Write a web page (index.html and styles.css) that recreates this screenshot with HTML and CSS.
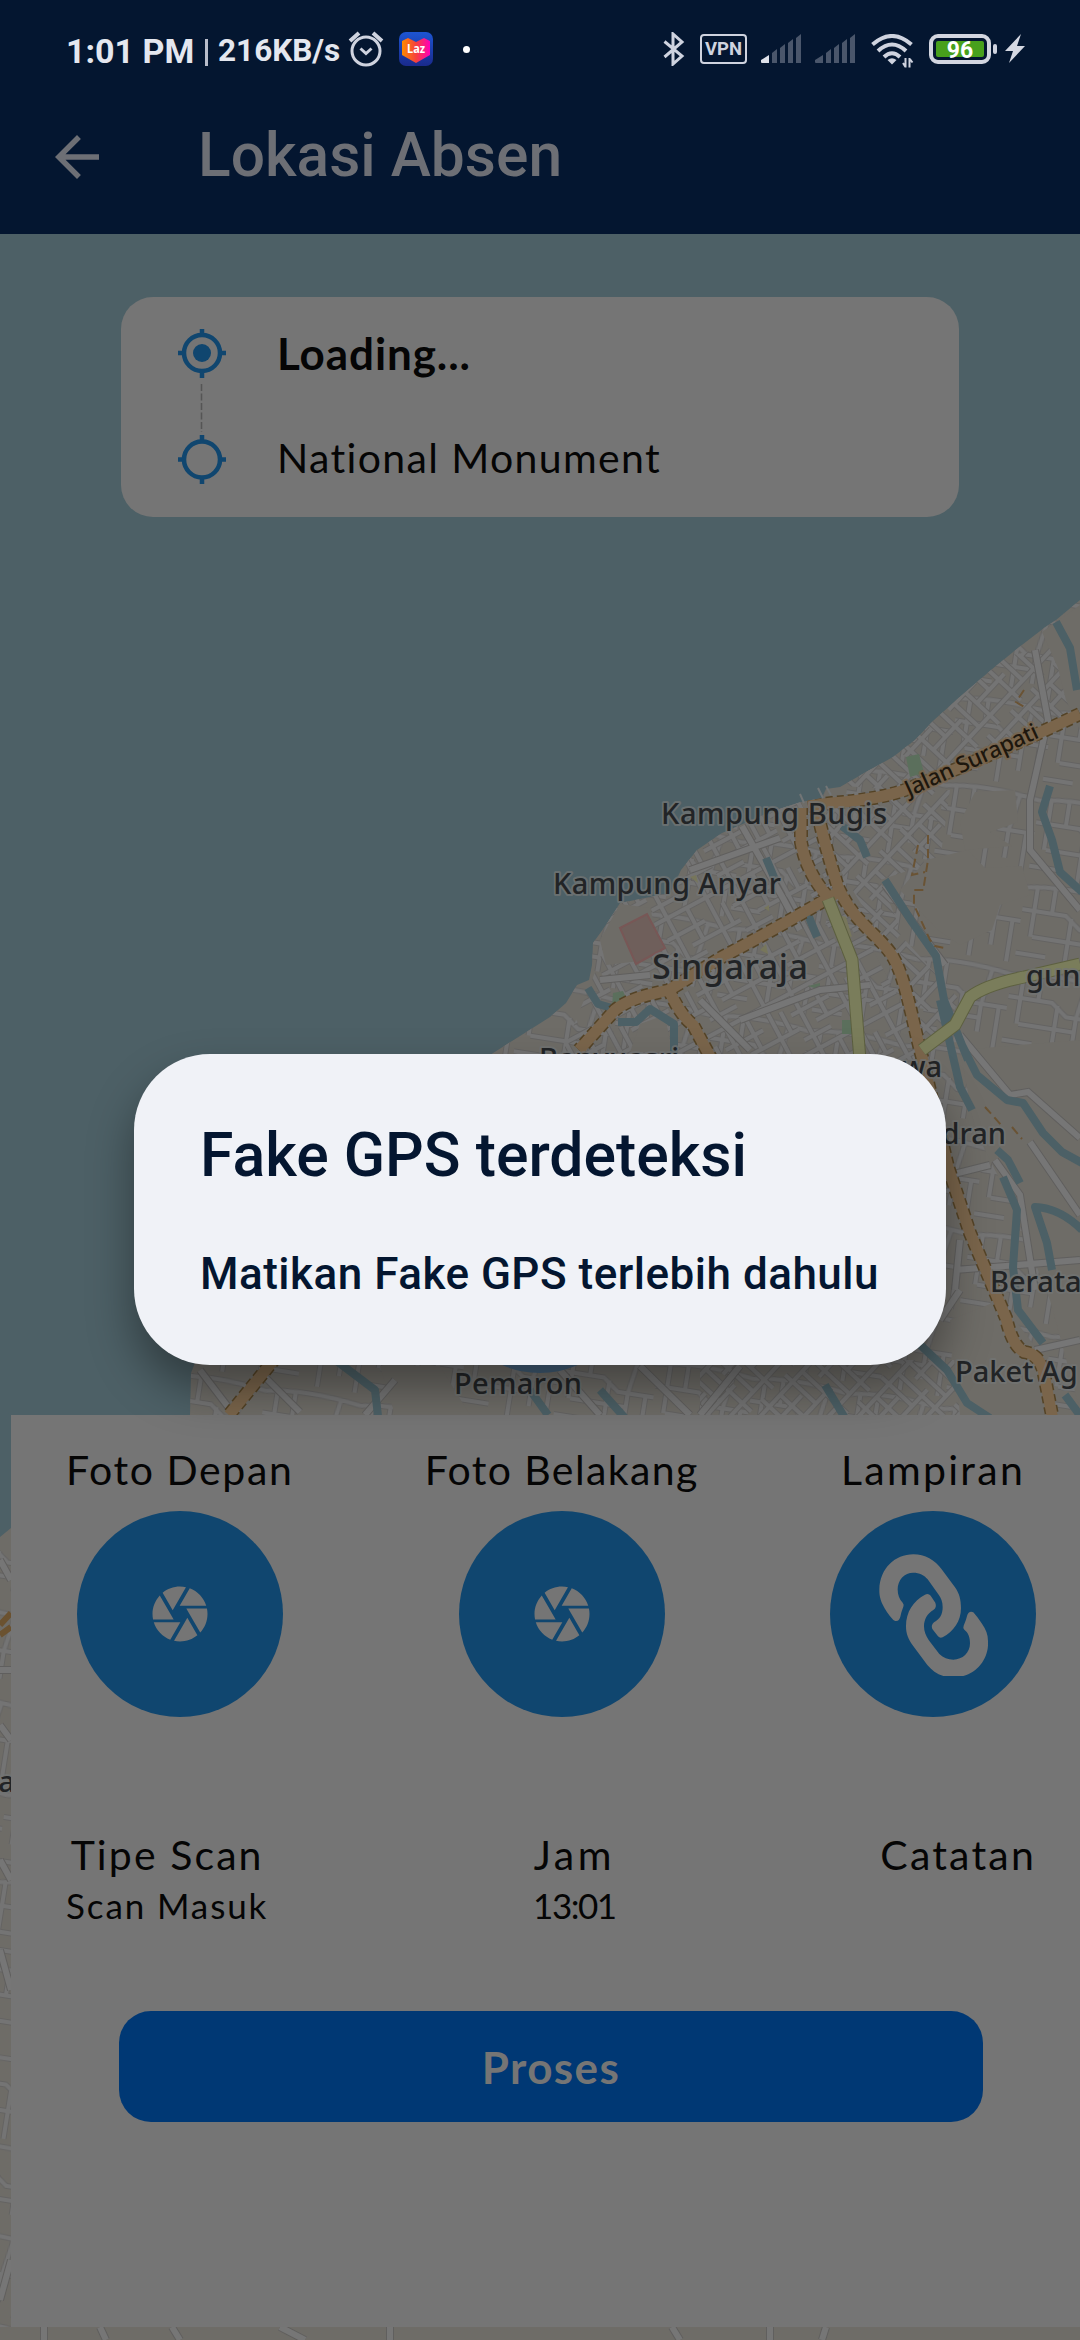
FILE: index.html
```html
<!DOCTYPE html>
<html lang="id">
<head>
<meta charset="utf-8">
<title>Lokasi Absen</title>
<link rel="stylesheet" href="styles.css">
</head>
<body>
<div class="screen">
  <header class="header">
    <div class="status">
      <span class="clock">1:01 PM</span><span class="bar"></span><span class="speed">216KB/s</span>
      <svg class="alarm" width="36" height="38" viewBox="0 0 36 38" fill="none" stroke="#cfd3df" stroke-width="3"><circle cx="18" cy="21" r="14"/><path d="M2 11L11 3M34 11L25 3" stroke-width="4"/><path d="M12.500 18.500l5.500 5 5.500-5" stroke-width="3"/></svg>
      <svg class="laz" width="34" height="34" viewBox="0 0 34 34"><defs><linearGradient id="lg" x1="0" x2="1"><stop offset="0" stop-color="#ff8a00"/><stop offset=".5" stop-color="#f6413c"/><stop offset="1" stop-color="#ff00b8"/></linearGradient><linearGradient id="lb" x2="0" y2="1"><stop stop-color="#1d55d2"/><stop offset="1" stop-color="#1a2a8c"/></linearGradient></defs><rect width="34" height="34" rx="7" fill="url(#lb)"/><path d="M3 9l6-3 8 4 8-4 6 3v14l-14 8-14-8z" fill="url(#lg)"/><text x="8" y="21" class="laz-text" textLength="18" lengthAdjust="spacingAndGlyphs">Laz</text></svg>
      <span class="dot"></span>
      <span class="grow"></span>
      <svg class="bt" width="22" height="34" viewBox="0 0 22 34" fill="none" stroke="#cfd3df" stroke-width="3"><path d="M1.500 9.500L19 24l-9 8V2l9 8L1.500 25"/></svg>
      <span class="vpn">VPN</span>
      <svg class="sig" width="40" height="30" viewBox="0 0 40 30" fill="#4a566b"><path fill="#dfe2ea" d="M0 26l8-5v8H1a1 1 0 0 1-1-1z"/><path d="M11 19l5-4v14h-5zM19 14l5-4v19h-5zM27 9l5-4v24h-5zM35 4l5-4v29h-5z"/></svg>
      <svg class="sig" width="40" height="30" viewBox="0 0 40 30" fill="#4a566b"><path d="M0 26l8-5v8H1a1 1 0 0 1-1-1zM11 19l5-4v14h-5zM19 14l5-4v19h-5zM27 9l5-4v24h-5zM35 4l5-4v29h-5z"/></svg>
      <svg class="wifi" width="44" height="34" viewBox="0 0 44 34" fill="none" stroke="#cfd3df" stroke-width="4"><path d="M1.500 10.500Q21 -6.500 40.500 10.500M7 17Q21 4 35 17M13 23Q21 15.500 29 23"/><path d="M21 30.500l-4.500-4.500q4.500-3.500 9 0z" fill="#cfd3df" stroke="none"/><path d="M34.500 24v9.500M32 29l2.500 4M38.500 33.500V24M38.500 24.500l3 4" stroke-width="2"/></svg>
      <span class="battery"><span class="level">96</span></span><span class="nub"></span>
      <svg class="bolt" width="20" height="30" viewBox="0 0 20 30"><path d="M16 0L0 17h8L4 29 20 12h-8z" fill="#d5d8e2"/></svg>
    </div>
    <div class="titlebar">
      <svg width="66" height="66" viewBox="0 0 24 24" fill="#6d6f75"><path d="M20 11H7.830l5.590-5.590L12 4l-8 8 8 8 1.410-1.410L7.830 13H20z"/></svg>
      <h1>Lokasi Absen</h1>
    </div>
  </header>

  <main class="stage">
    <svg class="map" width="1080" height="2106" viewBox="0 234 1080 2106">
      <defs>
        <pattern id="sa" width="74" height="62" patternUnits="userSpaceOnUse" patternTransform="rotate(-28)">
          <path class="casing" d="M0 8H74M0 28H42M20 44H74M0 56H30M10 0V62M32 8V44M54 0V62M66 20V44"/>
          <path class="street" d="M0 8H74M0 28H42M20 44H74M0 56H30M10 0V62M32 8V44M54 0V62M66 20V44"/>
        </pattern>
        <pattern id="sb" width="64" height="72" patternUnits="userSpaceOnUse" patternTransform="rotate(-47)">
          <path class="casing" d="M0 10H64M0 26H38M22 42H64M0 60H64M8 0V60M24 10V72M42 0V42M56 10V72"/>
          <path class="street" d="M0 10H64M0 26H38M22 42H64M0 60H64M8 0V60M24 10V72M42 0V42M56 10V72"/>
        </pattern>
        <pattern id="sc" width="96" height="88" patternUnits="userSpaceOnUse" patternTransform="rotate(9)">
          <path class="casing" d="M0 12Q40 4 96 12M0 34H44L60 46H96M14 60H70M0 78H30M12 12V60M30 8V34M50 36V88M76 10L70 46V74M88 46V88"/>
          <path class="street" d="M0 12Q40 4 96 12M0 34H44L60 46H96M14 60H70M0 78H30M12 12V60M30 8V34M50 36V88M76 10L70 46V74M88 46V88"/>
        </pattern>
        <clipPath id="land"><path d="M1080 600L1056 620 1044 628 1018 648 991 670 962 695 934 720 915 740 893 757 866 772 840 787 826 789 822 798 801 802 770 812 722 833 697 850 681 870 670 893 620 903 606 925 593 943 592 965 589 980 577 985 566 1003 550 1017 520 1036 490 1055 400 1130 200 1350 191 1373 190 1415 60 1500 11 1528 0 1537V2340H1080z"/></clipPath>
        <path id="orange" d="M1080 714C1030 738 960 768 905 790Q880 799 832 803L808 806M801 808V842Q806 872 828 897M815 803Q826 850 838 887C855 925 880 935 893 957S912 1020 922 1057L948 1167 970 1233 990 1280 1006 1318Q1012 1345 1024 1352 1040 1354 1044 1374L1053 1420M842 890C800 915 760 937 722 957L669 990C648 995 630 998 615 1010L579 1050M669 990Q680 1015 693 1025L713 1062M290 1340L229 1415"/>
        <path id="yellow" d="M828 899L852 960 860 1060M1080 964L1024 977Q985 985 970 997L955 1025 922 1050"/>
      </defs>
      <rect y="234" width="1080" height="2106" fill="#4d6066"/>
      <g clip-path="url(#land)">
        <rect y="560" width="1080" height="1780" fill="#6e6c67"/>
        <rect y="560" width="1080" height="1780" fill="url(#sc)"/>
        <path d="M1080 640L990 660 830 785 900 790 1080 716z" fill="url(#sb)" class="district"/>
        <path d="M610 900L690 840 800 800 840 890 900 1000 920 1060H560L600 960z" fill="url(#sa)" class="district"/>
        <path d="M890 790L950 790 940 860 880 880 905 940 960 1000 925 1060 890 950 840 870 820 800z" fill="url(#sb)" class="district"/>
        <path d="M700 1360H1000V1415H700z" fill="url(#sb)" class="district"/>
        <g fill="#6e6c67">
          <path d="M975 792L1015 790 1018 822 990 832 1012 846 965 850 960 822z"/><path d="M926 860L968 850 985 868 1022 866 1030 895 1000 905 992 930 960 945 938 930 900 890z"/>
          <path d="M1042 632L1080 605V730L1066 700 1058 668z"/><path d="M620 904L650 908 660 946 648 960 606 965 600 940z"/>
          <path d="M640 1024L665 1015 672 1052H630z"/><path d="M960 1050L1080 1040V1410L1050 1300 1010 1200 975 1130z"/><path d="M950 1320L1000 1300 1045 1360 1050 1415H960z"/><path d="M380 1366L440 1366 470 1415H395zM0 2327H1080V2340H0z"/>
        </g>
        <path d="M620 928L647 914 665 948 636 964z" class="school"/>
        <g fill="#5b6f5c"><path d="M906 757l13-3 5 19-14 4zM613 993l10-2 4 9-9 9-6-2zM842 1020h12v14h-12zM808 986l12-3v7z"/></g>
        <g fill="#77765b"><path d="M838 915l8 2 6 20-8-2zM760 950l6-6 2 10zM690 877l6-2 2 8zM764 908l5-3v6z"/></g>
        <g class="casing wide"><path id="lanes" d="M1035 650L1048 720 1030 800 1030 850 1080 910M742 826L784 900 800 930M690 870L780 838M600 980L650 975M740 1020L820 990 870 985M960 1035L1010 1095 1028 1092 1080 1138M1030 1142L1080 1215M995 1160L1020 1195 1027 1240 1035 1290M955 1270L1080 1260M930 1180L990 1165M960 1240L955 1290M940 1320L960 1290M1035 1350L1080 1340M885 885L945 965M700 1000L750 1050M200 1370L232 1412M260 1372L300 1412M365 1415L395 1380M560 1370L600 1415M640 1366L690 1415M740 1366L700 1415M0 1560L11 1580M0 1670H11M0 1725L11 1740M0 1860L11 1880M0 1950L11 1990M0 2300L11 2260M44 2327V2340M100 2327L106 2340M172 2327L180 2340M280 2327L305 2340M390 2340V2327M672 2327L680 2340M770 2327V2340M826 2327L822 2340"/></g>
        <use href="#lanes" class="lane"/>
        <g class="river">
          <path d="M1056 622L1070 648 1077 690"/><path d="M1050 786L1042 812 1052 840 1060 872 1082 892"/>
          <path d="M885 880L912 922 936 956 944 1000 968 1060M940 1000L960 1087 972 1110M962 1045L977 1075 1007 1100 1023 1103 1043 1133 1062 1152 1082 1163"/>
          <path d="M842 826L860 840 867 857M766 858L776 882M807 912L817 937M588 988L598 1004 612 1008M618 1022L636 1022 650 1009 674 1024 674 1056"/>
          <path d="M997 1150L1008 1160 1020 1183M1003 1177L1017 1210 1013 1267 1018 1310 1043 1343M1082 1230Q1060 1208 1035 1207L1047 1243 1052 1270M915 1340L947 1370 967 1403 990 1418M338 1362L375 1390 378 1416M600 1390L625 1418M825 1385L845 1418M1065 1395L1082 1418M530 1390L548 1415"/>
        </g>
        <g fill="none"><use href="#orange" stroke="#544326" stroke-width="14" stroke-dasharray="7 4"/><use href="#orange" stroke="#7a654b" stroke-width="11"/><use href="#yellow" stroke="#5d6040" stroke-width="13"/><use href="#yellow" stroke="#7a7d5b" stroke-width="11"/></g>
        <path class="trail" d="M928 835V860L924 885V890L914 890V905L930 940 935 946 945 948M918 845L912 875 925 872M1024 690L1016 702 1026 708M985 1107L1002 1126M1012 1127L1022 1139"/>
        <path d="M0 1625l11-12M0 1635l11-8" stroke="#6b5230" stroke-width="6"/>
      </g>
      <path d="M800 794l4 9M818 788l5 10M826 786l5 9" stroke="#727576" stroke-width="2"/>
      <circle cx="540" cy="1279" r="94" fill="#425f78"/>
      <g class="place">
        <text x="661" y="824" textLength="226">Kampung Bugis</text>
        <text x="553" y="893.500" textLength="228">Kampung Anyar</text>
        <text x="652" y="978.500" class="city" textLength="156">Singaraja</text>
        <text x="539" y="1069" textLength="140">Banyuasri</text>
        <text x="1026" y="986">gun</text>
        <text x="942" y="1077" text-anchor="end">wa</text>
        <text x="1006" y="1144" text-anchor="end">dran</text>
        <text x="990" y="1291.500">Berata</text>
        <text x="955" y="1381.500">Paket Ag</text>
        <text x="454" y="1394" textLength="128">Pemaron</text>
        <text x="-20" y="1792">Ka</text>
        <text class="road" textLength="144" transform="translate(909 797) rotate(-24.500)">Jalan Surapati</text>
      </g>
    </svg>

    <div class="content">
      <section class="route">
        <svg width="48" height="156" viewBox="0 0 48 156" fill="none" stroke="#10466f" stroke-width="4.500"><circle cx="24" cy="24" r="18"/><circle cx="24" cy="24" r="9" fill="#10466f" stroke="none"/><path d="M24 0v8M24 41v8M0 24h8M40 24h8M24 106v8M24 147v8M0 130.500h8M40 130.500h8"/><circle cx="24" cy="130.500" r="18"/><path d="M23.500 55v48" stroke="#555" stroke-width="1.500" stroke-dasharray="7 2.500"/></svg>
        <div class="stops"><b>Loading...</b><span>National Monument</span></div>
      </section>

      <section class="panel">
        <div class="row media">
          <div class="cell"><span class="label w-depan">Foto Depan</span><span class="round"><svg width="66" height="66" viewBox="0 0 24 24" fill="#757575"><path id="shutter" d="M9.400 10.500l4.770-8.260C13.470 2.090 12.750 2 12 2c-2.400 0-4.600.850-6.320 2.250l3.660 6.350.060-.100zM21.540 9c-.920-2.920-3.150-5.260-6-6.340L11.880 9h9.660zm.260 1h-7.490l.290.500 4.760 8.250C21 16.970 22 14.610 22 12c0-.690-.070-1.350-.200-2zM8.540 12l-3.900-6.750C3.010 7.030 2 9.390 2 12c0 .690.070 1.350.200 2h7.490l-1.150-2zm-6.080 3c.920 2.920 3.150 5.260 6 6.340L12.120 15H2.460zm11.270 0l-3.900 6.760c.700.150 1.420.240 2.170.240 2.400 0 4.600-.850 6.320-2.250l-3.660-6.350-.930 1.600z"/></svg></span></div>
          <div class="cell"><span class="label w-belakang">Foto Belakang</span><span class="round"><svg width="66" height="66" viewBox="0 0 24 24" fill="#757575"><use href="#shutter"/></svg></span></div>
          <div class="cell"><span class="label w-lampiran">Lampiran</span><span class="round"><svg width="206" height="206" viewBox="0 0 206 206" fill="#757575"><g transform="translate(30 -11) scale(.3333)"><path d="M100 360Q80 340 66 310C58 290 58 280 58 268 60 205 105 163 160 163 195 163 225 180 245 208L285 262C298 280 303 300 303 325 303 365 280 395 248 412Q240 416 234 409L217 387Q212 376 222 367C240 358 248 342 248 322 248 305 243 293 235 283L203 238C193 225 178 218 160 218 133 218 113 240 113 268 113 285 118 298 128 308Q133 314 130 320 124 335 121 350 117 366 104 362z"/><path d="M195 284Q205 279 212 287L226 308Q231 322 221 329C202 340 192 358 192 379 192 395 198 408 206 420L238 462C250 474 264 479 280 479 308 479 330 458 330 430 330 412 325 398 313 389Q308 384 311 377 318 362 322 345 328 331 340 337 352 350 365 370C378 388 384 405 384 422V437C381 480 352 516 310 528H250C230 522 215 510 202 495L158 436C145 417 138 402 138 379 138 335 160 303 195 284z"/></g></svg></span></div>
        </div>
        <div class="row info">
          <div class="cell"><span class="label w-tipe">Tipe Scan</span><span class="value w-masuk">Scan Masuk</span></div>
          <div class="cell"><span class="label w-jam">Jam</span><span class="value w-time">13:01</span></div>
          <div class="cell"><span class="label w-catatan">Catatan</span></div>
        </div>
        <button class="submit">Proses</button>
      </section>
    </div>
  </main>

  <div class="overlay">
    <div class="dialog" role="dialog">
      <h2>Fake GPS terdeteksi</h2>
      <p>Matikan Fake GPS terlebih dahulu</p>
    </div>
  </div>
</div>
</body>
</html>
```
FILE: styles.css
```css
* { box-sizing: border-box; }
body { margin: 0; }
.screen { position: relative; width: 1080px; height: 2340px; overflow: hidden; display: flex; flex-direction: column; font-family: Lato, "Open Sans", sans-serif; color: #050505; }
svg { display: block; flex: none; }

.header { height: 234px; flex: none; background: #041630; font-family: Roboto, sans-serif; }
.status { height: 98px; padding: 0 55px 0 66px; display: flex; align-items: center; color: #e4e7ef; white-space: nowrap; }
.clock { width: 128px; font-size: 34px; font-weight: 700; margin-top: 3px; }
.bar { width: 3px; height: 27px; margin: 7px 10px 0 11px; background: #b9bdca; }
.speed { width: 130px; font-size: 31.500px; font-weight: 700; margin-top: 3px; }
.laz { margin-left: 15px; }
.laz-text { font: 700 13px "Open Sans", sans-serif; fill: #fff; }
.dot { width: 7px; height: 7px; border-radius: 50%; background: #fff; margin-left: 30px; }
.grow { flex: 1; }
.vpn { width: 47px; height: 30px; margin: 0 14px 0 15px; border: 2.500px solid #cfd3df; border-radius: 4px; font-size: 18.500px; font-weight: 700; line-height: 26px; text-align: center; color: #cfd3df; }
.sig { margin-right: 14px; }
.wifi { margin: 3px 14px 0 2px; }
.battery { width: 62px; height: 30px; border: 4px solid #d3d6e0; border-radius: 9px; padding: 3px; display: flex; }
.level { flex: 1; border-radius: 2px; background: #48a01c; color: #fff; font-size: 23px; font-weight: 700; line-height: 19px; text-align: center; }
.nub { width: 4px; height: 10px; margin: 0 8px 0 2px; border-radius: 2px; background: #cfd3df; }
.titlebar { height: 118px; padding-left: 44px; display: flex; align-items: center; gap: 88px; }
.titlebar h1 { margin: -4px 0 0; font-size: 60.500px; font-weight: 500; color: #6d6f75; white-space: nowrap; }

.stage { flex: 1; display: grid; }
.map, .content { grid-area: 1 / 1; }
.casing { fill: none; stroke: #646362; stroke-width: 6; }
.street { fill: none; stroke: #747474; stroke-width: 4; }
.casing.wide { stroke: #605f5e; stroke-width: 8; }
.lane { fill: none; stroke: #767676; stroke-width: 6; }
.district { stroke: none; }
.river { fill: none; stroke: #4c6066; stroke-width: 8; stroke-linejoin: round; }
.school { fill: #6f5f5b; stroke: #785756; stroke-width: 2; }
.trail { fill: none; stroke: #6a5334; stroke-width: 2; stroke-dasharray: 9 5; }
.place { font: 500 29px "Noto Sans", sans-serif; fill: #222426; stroke: #727474; stroke-width: 4; stroke-opacity: .75; paint-order: stroke; stroke-linejoin: round; }
.place .city { font-size: 34px; }
.place .road { font-size: 22.500px; fill: #1d170e; stroke: #7a654b; }

.content { display: flex; flex-direction: column; padding: 63px 0 13px 11px; position: relative; }
.route { width: 838px; height: 220px; margin-left: 110px; padding: 32px 0 0 57px; border-radius: 32px; background: #757575; display: flex; gap: 51px; }
.stops { display: flex; flex-direction: column; white-space: nowrap; margin-top: -3px; }
.stops b { font-size: 44px; line-height: 54px; letter-spacing: .9px; }
.stops span { font-size: 41px; line-height: 50px; margin-top: 53px; letter-spacing: 1.350px; }
.panel { margin-top: auto; height: 912px; background: #757575; padding: 28px 44px 0 55px; display: flex; flex-direction: column; }
.row { display: flex; justify-content: space-between; }
.cell { display: flex; flex-direction: column; align-items: center; white-space: nowrap; }
.label { font-size: 41px; line-height: 54px; }
.value { font-size: 35px; line-height: 46px; }
.w-depan { letter-spacing: 1.600px; }
.w-belakang { letter-spacing: 1.400px; }
.w-lampiran { letter-spacing: 2.300px; }
.w-tipe { letter-spacing: 2.100px; }
.w-masuk { letter-spacing: 1.900px; }
.w-jam { letter-spacing: 3.500px; }
.w-time { letter-spacing: -1.500px; }
.w-catatan { letter-spacing: 2.200px; }
.round { width: 206px; height: 206px; margin-top: 14px; border-radius: 50%; background: #10466f; display: flex; align-items: center; justify-content: center; }
.info { margin-top: 111px; height: 100px; }
.submit { width: 864px; height: 111px; margin: 83px 0 0 53px; border: 0; border-radius: 32px; background: #003874; color: #757575; font: 700 44px Lato, sans-serif; letter-spacing: 1.400px; padding: 0; flex: none; }

.overlay { position: absolute; inset: 0; padding-top: 79px; display: flex; align-items: center; justify-content: center; }
.dialog { width: 812px; height: 311px; padding: 66px 66px 0; border-radius: 76px; background: #f0f2f7; color: #041630; font-family: Roboto, sans-serif; box-shadow: 0 24px 46px rgba(0, 0, 0, .38); white-space: nowrap; }
.dialog h2 { margin: 0; font-size: 60.700px; line-height: 71px; font-weight: 500; }
.dialog p { margin: 57px 0 0; font-size: 44px; line-height: 52px; font-weight: 500; letter-spacing: .5px; }
```
